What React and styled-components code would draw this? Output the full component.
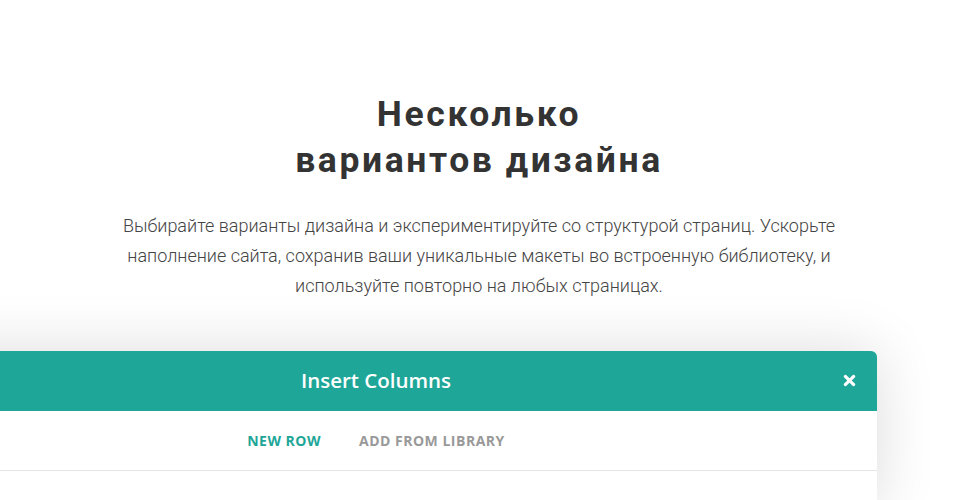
import React from "react";
import styled, { createGlobalStyle } from "styled-components";
import { FaTimes } from "react-icons/fa";

const GlobalStyle = createGlobalStyle`
  html, body {
    margin: 0;
    padding: 0;
    background: #fff;
    overflow: hidden;
  }
`;

const Page = styled.div`
  width: 965px;
  height: 500px;
  overflow: hidden;
  display: flex;
  flex-direction: column;
  align-items: center;
  padding: 91px 7px 0 0;
  box-sizing: border-box;
`;

const Title = styled.h2`
  margin: 0;
  font-family: Roboto, "Noto Sans", sans-serif;
  font-weight: 700;
  font-size: 35.5px;
  line-height: 46px;
  letter-spacing: 2.6px;
  color: #333;
  text-align: center;
`;

const Lead = styled.p`
  margin: 28px 0 0;
  width: 780px;
  font-family: Roboto, "Noto Sans", sans-serif;
  font-weight: 300;
  font-size: 18px;
  line-height: 30px;
  color: #444;
  text-align: center;
`;

const Modal = styled.div`
  align-self: flex-start;
  margin: 50px 0 0 -125px;
  width: 1002px;
  background: #fff;
  border-radius: 6px 6px 0 0;
  box-shadow: 0 0 60px rgba(0, 0, 0, 0.14);
  flex-shrink: 0;
`;

const Header = styled.div`
  position: relative;
  height: 60px;
  background: #1ea698;
  border-radius: 6px 6px 0 0;
  display: flex;
  align-items: center;
  justify-content: center;
  padding-bottom: 3px;
  box-sizing: border-box;
`;

const HeaderTitle = styled.span`
  font-family: "Open Sans", "Noto Sans", sans-serif;
  font-weight: 600;
  font-size: 20.5px;
  color: #fff;
`;

const Close = styled.button`
  position: absolute;
  right: 19px;
  top: 21px;
  padding: 0;
  border: 0;
  background: none;
  color: #fff;
  display: flex;
  cursor: pointer;
`;

const Tabs = styled.div`
  height: 59px;
  border-bottom: 1px solid #e4e4e4;
  display: flex;
  align-items: center;
  justify-content: center;
  gap: 38px;
`;

const Tab = styled.span`
  font-family: "Open Sans", "Noto Sans", sans-serif;
  font-weight: 700;
  font-size: 14px;
  letter-spacing: 0.5px;
  text-transform: uppercase;
  color: ${(p) => (p.active ? "#1ea698" : "#999")};
`;

const Body = styled.div`
  height: 40px;
`;

export default function App() {
  return (
    <>
      <GlobalStyle />
      <Page>
        <Title>
          Несколько
          <br />
          вариантов дизайна
        </Title>
        <Lead>
          Выбирайте варианты дизайна и экспериментируйте со структурой страниц.
          Ускорьте наполнение сайта, сохранив ваши уникальные макеты во
          встроенную библиотеку, и используйте повторно на любых страницах.
        </Lead>
        <Modal>
          <Header>
            <HeaderTitle>Insert Columns</HeaderTitle>
            <Close aria-label="Close">
              <FaTimes size={17} />
            </Close>
          </Header>
          <Tabs>
            <Tab active>New Row</Tab>
            <Tab>Add from Library</Tab>
          </Tabs>
          <Body />
        </Modal>
      </Page>
    </>
  );
}
